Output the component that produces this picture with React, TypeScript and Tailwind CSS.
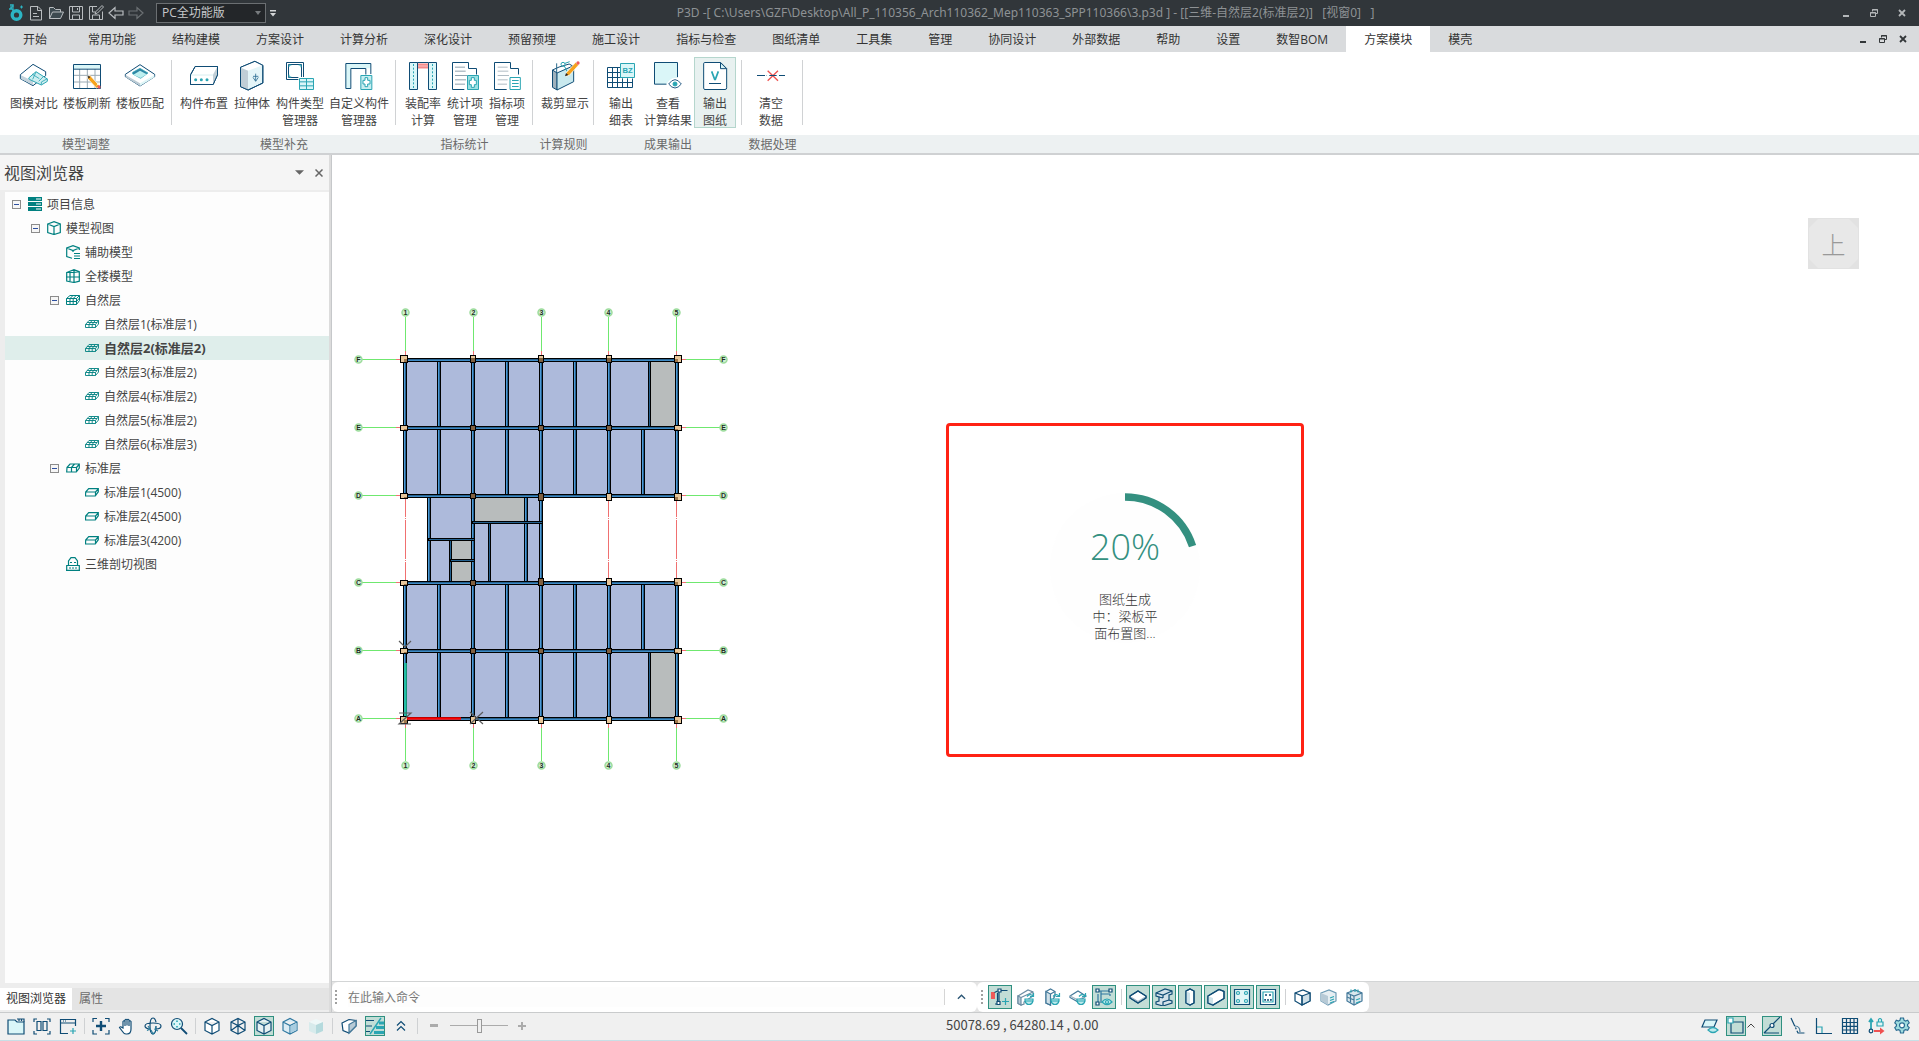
import React from "react";

const NAVY = "#0f4c75";
const TEAL = "#2aa5b3";
const ICE = "#daf6f8";
const GREEN = "#008080";

type Kids = { children: React.ReactNode };

/* ---------- title bar ---------- */

function TitleIcon({ children, label }: Kids & { label: string }) {
  return (
    <button aria-label={label} className="flex h-5 w-5 items-center justify-center">
      <svg viewBox="0 0 16 16" className="h-4 w-4" fill="none" stroke="#b9bdc0" strokeWidth="1">
        {children}
      </svg>
    </button>
  );
}

function WindowButtons({ color }: { color: string }) {
  return (
    <>
      <button aria-label="最小化" className="flex h-5 w-4 items-center justify-center">
        <svg viewBox="0 0 10 10" className="h-[10px] w-[10px]"><path d="M2 7h6v2H2z" fill={color} /></svg>
      </button>
      <button aria-label="还原" className="flex h-5 w-4 items-center justify-center">
        <svg viewBox="0 0 10 10" className="h-[10px] w-[10px]" fill="none" stroke={color}>
          <path d="M3.5 3.5v-2h5v4h-2M1.500 4.500h5v4h-5zM3 2h6M1 5h6" />
        </svg>
      </button>
      <button aria-label="关闭" className="flex h-5 w-4 items-center justify-center">
        <svg viewBox="0 0 10 10" className="h-[10px] w-[10px]" fill="none" stroke={color} strokeWidth="1.800">
          <path d="M2 2l6 6M8 2l-6 6" />
        </svg>
      </button>
    </>
  );
}

function TitleBar() {
  return (
    <header className="flex h-[26px] shrink-0 items-center bg-[#31363a]">
      <div className="flex items-center pl-[6px]">
        <div className="flex h-5 w-5 items-center justify-center">
          <svg viewBox="0 0 16 18" className="h-[18px] w-4" fill="none">
            <circle cx="8.500" cy="11" r="4.300" stroke="#2cb5c4" strokeWidth="3.400" />
            <path d="M2 1h3v2H3v2h2v5M1 5h2" stroke="#2cb5c4" strokeWidth="1.500" />
            <path d="M12 3h3M13.500 1.500v3" stroke="#2cb5c4" />
          </svg>
        </div>
        <TitleIcon label="新建">
          <path d="M2.500 1.500h7.500l3.500 3.500v10h-11zM9.500 1.500v4h4M5 8.500h4M5 11.500h6" />
        </TitleIcon>
        <TitleIcon label="打开">
          <path d="M1.500 13.500v-11h4l2 2h5v2.500M1.500 13.500l3-6.500h11l-3 6.500z" fill="#3d4a50" />
        </TitleIcon>
        <TitleIcon label="保存">
          <path d="M1.500 1.500h13v13h-13zM4.500 1.500v5.500h7v-5.500M4.500 14.500v-4.500h7v4.500M9.500 3v2" />
        </TitleIcon>
        <TitleIcon label="另存为">
          <path d="M9 1.500h-7.500v13h13v-8M4.500 1.500v5.500h3M4.500 14.500v-4.500h7v4.500M7 9l1-2.500 6-6 1.500 1.500-6 6z" />
        </TitleIcon>
        <TitleIcon label="撤销">
          <path d="M1 8l6-5.500V6h8v4H7v3.500z" strokeWidth="1.200" />
        </TitleIcon>
        <TitleIcon label="重做">
          <path d="M15 8L9 2.500V6H1v4h8v3.500z" stroke="#6c7174" strokeWidth="1.200" />
        </TitleIcon>
      </div>
      <div className="relative ml-[10px] flex h-5 w-[110px]">
        <select
          aria-label="功能版本"
          className="h-full w-full appearance-none border border-[#6b6f72] bg-[#232629] pl-[5px] text-xs leading-4 text-[#c6c8ca]"
        >
          <option>PC全功能版</option>
        </select>
        <svg viewBox="0 0 6 4" className="pointer-events-none absolute top-2 right-[5px] h-1 w-[6px]">
          <path d="M0 0h6l-3 4z" fill="#777b7e" />
        </svg>
      </div>
      <button aria-label="自定义快速访问工具栏" className="ml-[2px] flex h-5 w-[10px] items-center justify-center">
        <svg viewBox="0 0 6 7" className="h-[7px] w-[6px]" fill="#d5d7d8"><path d="M0 0h6v1.500H0zM0 3h6L3 6.500z" /></svg>
      </button>
      <h1 className="flex-1 text-center font-['Noto_Sans','Noto_Sans_CJK_SC',sans-serif] text-xs whitespace-pre text-[#8e9295]">
        {"P3D -[ C:\\Users\\GZF\\Desktop\\All_P_110356_Arch110362_Mep110363_SPP110366\\3.p3d ] - [[三维-自然层2(标准层2)]   [视窗0]   ]"}
      </h1>
      <div className="flex w-[146px] justify-end gap-3 pr-[9px]">
        <WindowButtons color="#b4b7b9" />
      </div>
    </header>
  );
}

/* ---------- tab bar ---------- */

const tabs = [
  "常用功能", "结构建模", "方案设计", "计算分析", "深化设计", "预留预埋", "施工设计", "指标与检查",
  "图纸清单", "工具集", "管理", "协同设计", "外部数据", "帮助", "设置", "数智BOM", "方案模块", "模壳",
];

function TabBar() {
  return (
    <nav className="flex h-[26px] shrink-0 bg-[#d9dbdd] text-xs text-[#333]">
      <button className="px-[23px] pt-[2px]">开始</button>
      {tabs.map((t) => (
        <button key={t} className={t === "方案模块" ? "bg-white px-[18px] pt-[2px]" : "px-[18px] pt-[2px]"}>
          {t}
        </button>
      ))}
      <div className="ml-auto flex items-center gap-1 pr-[8px]">
        <WindowButtons color="#333739" />
      </div>
    </nav>
  );
}

/* ---------- ribbon ---------- */

function RIcon({ x, children }: Kids & { x: number }) {
  return (
    <svg viewBox={`${x} 180 96 96`} className="h-8 w-8 shrink-0" fill="none" stroke={NAVY} strokeWidth="3">
      {children}
    </svg>
  );
}

const ribbonIcons: Record<string, React.ReactNode> = {
  compare: (
    <RIcon x={54}>
      <path d="M61 224l38-31 38 22v12l-38 30-38-21z" fill="#fff" />
      <path d="M63 226l36 18v11l-36-18z" fill="#c3d3dc" stroke="none" />
      <path d="M86 234l22-19 34 22v7l-18 11-36-17z" fill="#cdeef0" stroke={TEAL} />
      <path d="M96 222l22 14M108 216l-10 22M130 230l-14 14M124 246l18-10M124 246v8" stroke={TEAL} strokeWidth="2.500" />
    </RIcon>
  ),
  refresh: (
    <RIcon x={213}>
      <path d="M239 207v58M262 207v58M285 207v58M220 226h80M220 246h80" stroke="#9aa9b3" />
      <path d="M220.500 193.500h81v72h-81z" />
      <path d="M222 195h78v11h-78z" fill={ICE} stroke="none" />
      <path d="M220 207.500h82" />
      <path d="M264 229l6-3 28 31-8 8-27-29z" fill="#f6a21c" stroke="#fff" strokeWidth="2" />
      <path d="M263 228l8 2-5 6z" fill="#222" stroke="none" />
      <path d="M290 256l7-6" stroke="#fff7d0" />
      <circle cx="297" cy="261" r="5" fill="#f05a5a" stroke="none" />
    </RIcon>
  ),
  match: (
    <RIcon x={372}>
      <path d="M376 223l44-29 44 29v7l-44 28-44-28z" fill="#fff" />
      <path d="M377 225l43 25v8l-43-26z" fill="#bccbd4" stroke="none" />
      <path d="M420 250l43-25v7l-43 26z" fill="#dff6f7" stroke="none" />
      <path d="M398 217l22-12 24 14-22 16-24-13z" fill="#2f86a5" stroke={TEAL} strokeWidth="2" />
      <path d="M400 224l20-12 20 11-18 11z" fill="#bdf0f0" stroke="none" />
    </RIcon>
  ),
  place: (
    <RIcon x={564}>
      <path d="M571.500 224.500l14-25h67v25l-13 29h-68z" fill="#fff" />
      <path d="M639 224l13-24v24l-13 29z" fill="#c0ced6" stroke="none" />
      <path d="M571 225h68" stroke="#d8eef0" />
      <path d="M571.500 224.500l14-25h67v25l-13 29h-68z" />
      <g fill={TEAL} stroke="none"><circle cx="587" cy="239" r="4.500" /><circle cx="604" cy="239" r="4.500" /><circle cx="621" cy="239" r="4.500" /></g>
    </RIcon>
  ),
  extrude: (
    <RIcon x={708}>
      <path d="M721.500 202l43-18 24 12v53l-44 21-23-10z" fill="#e4f5f8" />
      <path d="M722 202l43-17 23 11-44 16z" fill="#fff" stroke="none" />
      <path d="M722 203l22 9v57l-22-9z" fill="#c0ced6" stroke="none" />
      <path d="M721.500 202l43-18 24 12v53l-44 21-23-10z" />
      <path d="M767 221v22M759 232l8 12 8-12M759 229h16" stroke="#2a6c92" strokeWidth="2.500" />
    </RIcon>
  ),
  types: (
    <RIcon x={849}>
      <path d="M856.500 187.500h51v51h-51zM862.500 193.500h39v39h-39z" />
      <path d="M864 201v-6h7M893 195h7v7M864 224v7h7" stroke={TEAL} />
      <path d="M892 231h50v42h-50z" fill="#fff" stroke="none" />
      <path d="M895.500 235.500h42v33h-42zM895 245.500h42M895 257.500h42M916.500 235v33" stroke={TEAL} fill={ICE} />
    </RIcon>
  ),
  custom: (
    <RIcon x={1028}>
      <path d="M1036 190.500h75v14h-61v61h-14z" fill={ICE} stroke="none" />
      <path d="M1111.500 222v-31.500h-75v75h15v-60h45v18" fill="none" />
      <path d="M1081.500 226.500h33v42h-33z" stroke={TEAL} fill="#c7eef0" />
      <path d="M1094 233h8v8h7v11h-7v8h-8v-8h-6v-11h6z" stroke={TEAL} fill="#fff" />
    </RIcon>
  ),
  assembly: (
    <RIcon x={21}>
      <path d="M28.500 187.500h24v81h-24zM85.500 187.500h24v81h-24z" fill={ICE} />
      <path d="M40.500 192v74M97.500 192v74" stroke={TEAL} strokeDasharray="6 5" />
      <path d="M52 187.500h33" />
      <path d="M54 192.500h30M54 198h30M54 203.500h30" stroke="#f05050" />
    </RIcon>
  ),
  stat: (
    <RIcon x={147}>
      <path d="M193 268.500h-35.500v-81h48v18h24v18" />
      <path d="M165 201.500h30M165 213.500h32M165 226.500h36M165 239.500h33M165 252.500h30" stroke="#8fa1ad" />
      <path d="M202.500 226.500h33v42h-33z" stroke={TEAL} fill="#9be0e2" />
      <path d="M214 233h9v8h6v13h-6v8h-9v-8h-6v-13h6z" fill="#fff" stroke={TEAL} />
    </RIcon>
  ),
  index: (
    <RIcon x={273}>
      <path d="M320 268.500h-36.500v-81h48v18h24v18" />
      <path d="M293 201.500h30M293 213.500h32M293 226.500h34M293 239.500h30M293 252.500h28" stroke="#b0bcc4" />
      <path d="M330 232.500h31v36h-31z" stroke={TEAL} fill="#fff" />
      <path d="M336 241.500h20M336 250.500h20M336 259.500h20" stroke={TEAL} />
    </RIcon>
  ),
  crop: (
    <RIcon x={447}>
      <path d="M457.500 210l14 9v51l-14-8z" fill="#9fb1bc" />
      <path d="M471 219l50-22v48l-50 25z" fill="#c9e9ee" />
      <path d="M457.500 210l20-9 30-9 14 8" />
      <path d="M470 190v26" stroke="#2b6b8e" />
      <circle cx="489" cy="193" r="6" stroke={TEAL} /><path d="M493 198l8 16M495 190l14-5" stroke={TEAL} />
      <path d="M499 218l28-31 9 8-28 31-12 3z" fill="#f6a21c" stroke="#fff" strokeWidth="2" />
      <path d="M495 229l3-10 7 6z" fill="#222" stroke="none" /><circle cx="534" cy="189" r="5" fill="#f05a5a" stroke="none" />
    </RIcon>
  ),
  table: (
    <RIcon x={615}>
      <path d="M660 202.500h-37.500v60h75v-27M622 217.500h38M622 232.500h76M622 247.500h76M637.500 202v60M652.500 202v60M667.500 235v27M682.500 235v27" />
      <path d="M661.500 190.500h42v42h-42z" fill={ICE} stroke={TEAL} />
      <text x="682.500" y="220" fontSize="23" fontWeight="700" textAnchor="middle" fill={TEAL} stroke="none" fontFamily="Liberation Sans, sans-serif">BZ</text>
    </RIcon>
  ),
  view: (
    <RIcon x={756}>
      <path d="M800 252.500h-36.500v-65h69v44" fill={ICE} />
      <path d="M804 252q20-28 42 0q-22 24-42 0z" fill="#fff" stroke="#fff" strokeWidth="8" />
      <path d="M806 252q19-26 38 0q-19 24-38 0z" fill="#fff" stroke="#2b5f88" />
      <circle cx="825" cy="252" r="6" fill={TEAL} stroke={TEAL} />
    </RIcon>
  ),
  drawing: (
    <RIcon x={900}>
      <path d="M917 187.500h48l18 18v58q0 5-5 5h-60q-4 0-4-4v-73q0-4 3-4z" fill="#fff" />
      <path d="M964.500 188v18h18z" fill={ICE} />
      <path d="M938 214l9 24h2l9-24" stroke={TEAL} strokeWidth="5" />
      <path d="M930 250.500h36" />
    </RIcon>
  ),
  clear: (
    <RIcon x={1065}>
      <path d="M1071 226.500h28M1137 226.500h18" strokeDasharray="24 3 4 3" />
      <path d="M1103 212l31 30M1134 212l-31 30" stroke="#ef5350" strokeWidth="4" />
      <path d="M1108 226.500h22" />
    </RIcon>
  ),
};

type RibbonTool = { icon: string; lines: string[]; active?: boolean };
const groups: { label: string; width: string; tools: RibbonTool[] }[] = [
  {
    label: "模型调整", width: "w-[172px] [&>div]:gap-px [&>div]:pl-2",
    tools: [
      { icon: "compare", lines: ["图模对比"] },
      { icon: "refresh", lines: ["楼板刷新"] },
      { icon: "match", lines: ["楼板匹配"] },
    ],
  },
  {
    label: "模型补充", width: "w-[224px] [&>div]:gap-px [&>div]:pl-[6px]",
    tools: [
      { icon: "place", lines: ["构件布置"] },
      { icon: "extrude", lines: ["拉伸体"] },
      { icon: "types", lines: ["构件类型", "管理器"] },
      { icon: "custom", lines: ["自定义构件", "管理器"] },
    ],
  },
  {
    label: "指标统计", width: "w-[137px] [&>div]:pl-[6px]",
    tools: [
      { icon: "assembly", lines: ["装配率", "计算"] },
      { icon: "stat", lines: ["统计项", "管理"] },
      { icon: "index", lines: ["指标项", "管理"] },
    ],
  },
  { label: "计算规则", width: "w-[61px] [&>div]:pl-[6px]", tools: [{ icon: "crop", lines: ["裁剪显示"] }] },
  {
    label: "成果输出", width: "w-[148px] [&>div]:pl-[6px]",
    tools: [
      { icon: "table", lines: ["输出", "细表"] },
      { icon: "view", lines: ["查看", "计算结果"] },
      { icon: "drawing", lines: ["输出", "图纸"], active: true },
    ],
  },
  { label: "数据处理", width: "w-[61px] [&>div]:pl-2", tools: [{ icon: "clear", lines: ["清空", "数据"] }] },
];

function Ribbon() {
  return (
    <div className="flex h-[103px] shrink-0 border-b-2 border-[#cfd1d3] bg-white text-xs">
      {groups.map((g) => (
        <section key={g.label} aria-label={g.label} className={`flex shrink-0 flex-col ${g.width}`}>
          <div className="flex flex-1 pt-[5px]">
            {g.tools.map((t) => (
              <button
                key={t.icon}
                className={
                  t.active
                    ? "flex h-[71px] min-w-[42px] flex-col items-center border border-[#b5d6cd] bg-[#e8f1f0] px-px pt-[2px] text-[#444]"
                    : "flex h-[71px] min-w-[42px] flex-col items-center border border-transparent px-px pt-[2px] text-[#444]"
                }
              >
                {ribbonIcons[t.icon]}
                <span className="mt-[3px] flex flex-col leading-[17px] whitespace-nowrap">
                  {t.lines.map((l) => <span key={l}>{l}</span>)}
                </span>
              </button>
            ))}
            <span className="mt-[3px] ml-auto h-[65px] w-px bg-[#d0d2d4]" />
          </div>
          <h2 className="h-[18px] bg-[#edf1f2] text-center leading-5 text-[#6b6b6b]">{g.label}</h2>
        </section>
      ))}
      <div className="flex flex-1 flex-col justify-end"><div className="h-[18px] bg-[#edf1f2]" /></div>
    </div>
  );
}

/* ---------- view browser ---------- */

const treeIcons: Record<string, React.ReactNode> = {
  project: <path d="M0 0h14v4H0zM0 5h14v4H0zM0 10h14v4H0zM8 1.500h5v1H8zM8 6.500h5v1H8zM8 11.500h5v1H8z" fill={GREEN} fillRule="evenodd" stroke="none" />,
  cube: <path d="M.7 3L7 .7 13.300 3v8.500L7 13.500.7 11.500zM.7 3L7 5.500 13.300 3M7 5.500v8" />,
  aux: <path d="M6 13.300L.7 11.500V3L7 .7 13.300 3v2M.7 3L7 5.500 13.300 3M8 8.500h6M8 11h6M8 13.500h6M7 5.500v1.500" />,
  whole: <path d="M.7 3.500L8 .7l5.300 2v9.500L8 13.500.7 12zM.7 3.500h7.300l5.300-.8M0 8h14M8 1v12.500M4 3v9" />,
  grid: <path d="M.5 5.500L4 2.500h9.500v5l-3 4H.5zM.5 5.500h10v6M10.500 5.500l3-3M.5 8.500h10l3-3.500M4 5.500v6M7.200 5.500v6M4 5.500l3-3M7.200 5.500l3-3" strokeWidth="1" />,
  floor: <path d="M.5 7.500L4 3.500h9.500V7l-3 3.500H.5zM.5 7.500h10v3M10.500 7.500l3-4M4 7.500v3M7.200 7.500v3M4 7.500l3-4M7.200 7.500l3-4M2.200 5.500h9.800" strokeWidth="0.900" />,
  std: <path d="M1 6.500l3-3.500h9.300v4l-3 4H.7zM1 6.500h9.500v4.500M10.500 6.500l3-3.500M5.500 6.500v4.500M5.500 6.500l3-3.500" />,
  slab: <path d="M.7 7l3-3.300h9.600v3l-3 4.300H.5zM.7 7h9.800v4M10.500 7l3-3.300" />,
  section: <path d="M2.500 6V4L5 .7h4L11.500 4v2M.7 13.500v-5h12.600v5M2.500 6v2.500M11.500 6v2.500M0 13.300h14M3 11h2M6 11h2M9 11h2M4 5.500h2M8 5.500h2" />,
};

const rows: { level: number; icon: string; text: string; open?: boolean; selected?: boolean }[] = [
  { level: 0, icon: "project", text: "项目信息", open: true },
  { level: 1, icon: "cube", text: "模型视图", open: true },
  { level: 2, icon: "aux", text: "辅助模型" },
  { level: 2, icon: "whole", text: "全楼模型" },
  { level: 2, icon: "grid", text: "自然层", open: true },
  { level: 3, icon: "floor", text: "自然层1(标准层1)" },
  { level: 3, icon: "floor", text: "自然层2(标准层2)", selected: true },
  { level: 3, icon: "floor", text: "自然层3(标准层2)" },
  { level: 3, icon: "floor", text: "自然层4(标准层2)" },
  { level: 3, icon: "floor", text: "自然层5(标准层2)" },
  { level: 3, icon: "floor", text: "自然层6(标准层3)" },
  { level: 2, icon: "std", text: "标准层", open: true },
  { level: 3, icon: "slab", text: "标准层1(4500)" },
  { level: 3, icon: "slab", text: "标准层2(4500)" },
  { level: 3, icon: "slab", text: "标准层3(4200)" },
  { level: 2, icon: "section", text: "三维剖切视图" },
];
const indents = ["pl-[7px]", "pl-[26px]", "pl-[45px]", "pl-[64px]"];

function ViewBrowser() {
  return (
    <aside className="flex w-[329px] shrink-0 flex-col bg-[#ededed]">
      <div className="flex h-[35px] items-center bg-[#f5f5f5] pl-1">
        <h2 className="flex-1 text-base leading-5 text-[#444]">视图浏览器</h2>
        <button aria-label="面板菜单" className="flex h-5 w-5 items-center justify-center">
          <svg viewBox="0 0 10 5" className="h-[5px] w-[9px]"><path d="M0 0h10L5 5z" fill="#666" /></svg>
        </button>
        <button aria-label="关闭面板" className="flex h-5 w-5 items-center justify-center">
          <svg viewBox="0 0 8 8" className="h-2 w-2" stroke="#666" strokeWidth="1.500"><path d="M.5.5l7 7M7.500.5l-7 7" /></svg>
        </button>
      </div>
      <ul role="tree" aria-label="视图" className="mt-[2px] ml-[5px] flex-1 bg-[#fdfdfd] text-xs text-[#444]">
        {rows.map((r) => (
          <li
            key={r.text}
            role="treeitem"
            aria-selected={!!r.selected}
            aria-level={r.level + 1}
            className={`flex h-6 items-center ${indents[r.level]} ${r.selected ? "bg-[#dfeeeb] text-[13px] font-bold" : ""}`}
          >
            {r.open ? (
              <button aria-label="折叠" className="flex h-[9px] w-[9px] items-center justify-center border border-[#8c8c8c] bg-[#f6f6f6]">
                <span className="h-px w-[5px] bg-[#2d4fa0]" />
              </button>
            ) : (
              <span className="w-[9px]" />
            )}
            <svg viewBox="0 0 14 14" className="mr-[5px] ml-[7px] h-[14px] w-[14px]" fill="none" stroke={GREEN} strokeWidth="1.200">
              {treeIcons[r.icon]}
            </svg>
            <span className="pt-[2px]">{r.text}</span>
          </li>
        ))}
      </ul>
      <div className="mt-[5px] mb-[2px] flex h-[22px] bg-[#e4e4e4] text-xs">
        <button className="bg-white px-[6px] text-[#333]">视图浏览器</button>
        <button className="px-[7px] text-[#6b6b6b]">属性</button>
      </div>
    </aside>
  );
}

/* ---------- floor plan ---------- */

type Rect = [number, number, number, number];
const slabs: Rect[] = [[64, 69, 274, 138], [64, 292, 274, 138], [88, 206, 114, 86]];
const voids: Rect[] = [[310, 71, 26, 66], [310, 362, 26, 66], [134, 207, 51, 25], [111, 250, 21, 41]];
const vBeams: Rect[] = [
  [63, 69, 4, 138], [131, 69, 4, 360], [199, 69, 4, 360], [267, 69, 4, 138], [335, 69, 4, 138],
  [63, 292, 4, 138], [267, 292, 4, 138], [335, 292, 4, 138],
  [97, 69, 4, 137], [165, 69, 4, 137], [233, 69, 4, 137], [301, 137, 4, 69],
  [97, 292, 4, 137], [165, 292, 4, 137], [233, 292, 4, 137], [301, 292, 4, 69],
  [308, 69, 3, 69], [308, 360, 3, 69], [87, 205, 4, 88], [184, 205, 4, 88], [148, 232, 3, 61], [109, 249, 3, 44],
];
const hBeams: Rect[] = [
  [63, 68, 276, 4], [63, 136, 276, 4], [63, 204, 276, 4], [63, 291, 276, 4], [63, 359, 276, 4], [63, 427, 276, 4],
  [132, 231, 71, 3], [88, 248, 47, 3], [110, 269, 25, 3],
];
const columns: [number, number, number, number, boolean][] = [
  [60, 65, 8, 8, false], [130, 65, 6, 8, true], [198, 65, 6, 8, true], [266, 65, 6, 8, true], [334, 65, 8, 8, false],
  [60, 135, 8, 6, false], [130, 135, 6, 6, true], [198, 135, 6, 6, true], [266, 135, 6, 6, true], [334, 135, 8, 6, false],
  [60, 203, 8, 6, false], [130, 203, 6, 6, true], [198, 203, 6, 8, true], [266, 203, 6, 8, false], [334, 203, 8, 8, false],
  [60, 290, 8, 6, false], [130, 290, 6, 6, true], [198, 288, 6, 8, true], [266, 288, 6, 8, false], [334, 288, 8, 8, false],
  [60, 358, 8, 6, false], [130, 358, 6, 6, true], [198, 358, 6, 6, true], [266, 358, 6, 6, true], [334, 358, 8, 6, false],
  [60, 426, 8, 8, false], [130, 426, 6, 8, false], [198, 426, 6, 8, false], [266, 426, 6, 8, false], [334, 426, 8, 8, false],
];
const axisX: [string, number][] = [["1", 65.5], ["2", 133.5], ["3", 201.5], ["4", 268.5], ["5", 336.5]];
const axisY: [string, number][] = [["F", 69.5], ["E", 137.5], ["D", 205.5], ["C", 292.5], ["B", 360.5], ["A", 428.5]];

function Bubble({ x, y, label }: { x: number; y: number; label: string }) {
  return (
    <g>
      <circle cx={x} cy={y} r="3.500" fill="#d2efd2" stroke="#9ddc9d" strokeWidth="1.500" />
      <text x={x} y={y + 2.5} textAnchor="middle" fontSize="7" fontWeight="700" fill="#1c2e1f">{label}</text>
    </g>
  );
}

function FloorPlan() {
  return (
    <svg viewBox="0 0 400 500" className="absolute top-[135px] left-2 h-[500px] w-[400px]" fontFamily="Liberation Sans, sans-serif">
      {axisX.map(([l, x]) => (
        <g key={l}>
          <path d={`M${x} 27V61M${x} 438V471`} stroke="#6fe86f" />
          <path d={`M${x} 61V70M${x} 430V438`} stroke="#f07070" />
          <Bubble x={x} y={22.5} label={l} />
          <Bubble x={x} y={475.5} label={l} />
        </g>
      ))}
      {axisY.map(([l, y]) => (
        <g key={l}>
          <path d={`M22 ${y}H56M346 ${y}H380`} stroke="#6fe86f" />
          <path d={`M56 ${y}H62M340 ${y}H346`} stroke="#f07070" />
          <Bubble x={18.5} y={y} label={l} />
          <Bubble x={383.5} y={y} label={l} />
        </g>
      ))}
      {[65.5, 268.5, 336.5].map((x) => (
        <path key={x} d={`M${x} 208V227M${x} 228V229M${x} 230V269M${x} 270V271M${x} 272V291`} stroke="#f07070" />
      ))}
      {slabs.map(([x, y, w, h]) => <rect key={`${x}-${y}`} x={x} y={y} width={w} height={h} fill="#adbadb" />)}
      {voids.map(([x, y, w, h]) => <rect key={`${x}-${y}`} x={x} y={y} width={w} height={h} fill="#b8bcbc" />)}
      {vBeams.map(([x, y, w, h]) => (
        <g key={`${x}-${y}`}>
          <rect x={x} y={y} width={w} height={h} fill="#000" />
          <rect x={x + 1} y={y} width={w - 2} height={h} fill="#24618f" />
          {w > 3 && <rect x={x + 1} y={y} width="1" height={h} fill="#4d9ad6" />}
        </g>
      ))}
      {hBeams.map(([x, y, w, h]) => (
        <g key={`${x}-${y}`}>
          <rect x={x} y={y} width={w} height={h} fill="#000" />
          <rect x={x + 1} y={y + 1} width={w - 2} height={h - 2} fill="#24618f" />
          {h > 3 && <rect x={x + 1} y={y + 2} width={w - 2} height="1" fill="#3f8ac4" />}
        </g>
      ))}
      {columns.map(([x, y, w, h, dark]) => (
        <g key={`${x}-${y}`}>
          <rect x={x} y={y} width={w} height={h} fill="#000" />
          <rect x={x + 1} y={y + 1} width={w - 2} height={h - 2} fill={dark ? "#80603f" : "#e8c79b"} />
          {!dark && w === 8 && <rect x={x < 100 ? x + 4 : x + 1} y={y + 4} width="3" height={h - 5} fill="#a07a4e" />}
          {dark && h === 8 && y < 100 && <rect x={x + 1} y={y + 1} width="4" height="2" fill="#e8c79b" />}
        </g>
      ))}
      <path d="M65.500 373V426" stroke="#1fc3a0" strokeWidth="2.500" />
      <path d="M67 428.500H121" stroke="#f00" strokeWidth="2.500" />
      <path d="M59 351L65 357L71 351M59 423H71L59 434H71M130 422L143 434M143 422L130 434" stroke="#5c5c5c" strokeWidth="1.200" fill="none" />
    </svg>
  );
}

function ProgressPanel() {
  return (
    <div className="absolute top-[268px] left-[614px] flex h-[334px] w-[358px] justify-center rounded-[4px] border-[3px] border-[#ff2214] pt-[67px]">
      <div role="progressbar" aria-valuenow={20} aria-label="图纸生成进度" className="relative h-[150px] w-[150px]">
        <svg viewBox="0 0 150 150" className="absolute inset-0" fill="none">
          <circle cx="75" cy="75" r="75" fill="#fefefe" />
          <path d="M75 4A71 71 0 0 1 142.520 53.060" stroke="#349080" strokeWidth="7.500" />
        </svg>
        <div className="relative flex flex-col items-center pt-8">
          <span className="font-['Open_Sans',sans-serif] text-4xl leading-[44px] font-light text-[#349080]">20%</span>
          <p className="mt-[22px] w-[66px] text-center text-[13px] leading-[17px] font-light text-[#333]">
            图纸生成<br />中：梁板平<br />面布置图...
          </p>
        </div>
      </div>
    </div>
  );
}

function ViewCube() {
  return (
    <button aria-label="上视图" className="absolute top-[63px] right-[60px] h-[51px] w-[51px]">
      <svg viewBox="0 0 51 51" className="absolute inset-0">
        <path d="M0 0h51v51H0z" fill="#e2e2e2" />
        <path d="M10 1h31l9 9v31l-9 9H10l-9-9V10z" fill="#e8e8e8" />
      </svg>
      <span className="relative font-['Noto_Sans_CJK_SC',sans-serif] text-2xl leading-[51px] font-light text-[#999]">上</span>
    </button>
  );
}

/* ---------- bottom tool bars ---------- */

function Tool({ label, on, small, children }: Kids & { label: string; on?: boolean; small?: boolean }) {
  const size = small ? "h-5 w-5" : "h-6 w-6";
  return (
    <button
      aria-label={label}
      aria-pressed={!!on}
      className={`flex shrink-0 items-center justify-center ${size} ${on ? "border border-[#2f9080] bg-[#c2ddd6]" : ""}`}
    >
      <svg viewBox="0 0 18 18" className="h-[18px] w-[18px] shrink-0" fill="none" stroke={NAVY} strokeWidth="1.200">
        {children}
      </svg>
    </button>
  );
}

const Sep = () => <span className="h-4 w-px shrink-0 bg-[#cfd1d3]" />;
const WideSep = () => <span className="flex w-[6px] shrink-0 justify-center"><Sep /></span>;
const Grip = () => (
  <svg viewBox="0 0 2 16" className="h-4 w-[2px] shrink-0" fill="#a0a0a0">
    <path d="M0 1h2v2H0zM0 5h2v2H0zM0 9h2v2H0zM0 13h2v2H0z" />
  </svg>
);
const Cup = () => (
  <g stroke={TEAL}>
    <path d="M8 11h8v2q-1 3.500-4 3.500t-4-3.500zM8 13h8" fill="#bdeaec" />
    <path d="M10 8.500q3-3.500 6-.5M16.500 5v3.500H13" />
  </g>
);

function CommandBar() {
  return (
    <div className="flex h-[31px] shrink-0 border-t border-[#d3d5d6] bg-[#e4e4e4]">
      <div className="flex w-[645px] items-center rounded-md bg-white pl-[3px]">
        <Grip />
        <input
          aria-label="命令"
          placeholder="在此输入命令"
          className="ml-[11px] h-5 min-w-0 flex-1 bg-[#fdfdfd] text-xs text-[#555] outline-none placeholder:text-[#777]"
        />
        <span className="h-4 w-px bg-[#d5d5d5]" />
        <button aria-label="展开命令历史" className="flex h-6 w-8 items-center justify-center">
          <svg viewBox="0 0 10 6" className="h-[6px] w-[9px]" fill="none" stroke="#2b5675" strokeWidth="1.500"><path d="M1 5l4-4 4 4" /></svg>
        </button>
      </div>
      <div className="flex items-center gap-[2px] rounded-md bg-white pr-[3px] pl-1">
        <Grip />
        <span className="w-px" />
        <Tool label="添加轴线" on>
          <path d="M0 4h4v7H0z" fill="#f05a5a" stroke="none" />
          <path d="M8 4v10M9.500 2.500h7M6.500 5v10M3.500 4.500l3-1.500M4 16h4" />
          <path d="M7 1h3v3H7zM6 13.500h3v3H6z" fill="#fff" />
          <path d="M11 13.500h7M14.500 10v7" stroke={TEAL} />
        </Tool>
        <Tool label="显示墙体">
          <path d="M1 8l10-6 5 2v4l-9 6v2l-3 1-3-1.500z" fill="#fff" stroke="#6c8da3" /><path d="M1 8l3 1.500V17l-3-1.500z" fill="#b7cad6" stroke="#6c8da3" /><path d="M4 9.500L16 4" stroke="#6c8da3" /><Cup />
        </Tool>
        <Tool label="显示柱">
          <path d="M3 3.500L7.500 1 12 3.500V8l-4.500 7v2L3 15z" fill="#fff" stroke="#44799a" /><path d="M3 3.500L7.500 6v11L3 15z" fill="#cfe0e8" stroke="#44799a" /><path d="M7.500 6L12 3.500" stroke="#44799a" /><Cup />
        </Tool>
        <Tool label="显示楼板">
          <path d="M1 8l8-5 8 5-8 6-8-4.500z" fill="#fff" stroke="#44799a" /><path d="M1 8l8 4 8-4" stroke="#9fb5c3" /><Cup />
        </Tool>
        <Tool label="显示轴网" on>
          <path d="M3 3h12M3 6v9M15 6v2M6 3v12M6 6h9" stroke="#2f78a0" />
          <path d="M1 1h3v3H1zM14 1h3v3h-3zM1 14h3v3H1z" fill="#fff" />
          <path d="M7 14q5-6 10 0q-5 5-10 0z" stroke={TEAL} fill="#bdeaec" /><circle cx="12" cy="14" r="1.500" stroke={TEAL} />
        </Tool>
        <WideSep />
        <Tool label="板" on>
          <path d="M1 8l8-5 8 5v2l-8 5-8-5z" fill="#fff" /><path d="M1.500 9l7.500 4.500L16.500 9" stroke="#9fb5c3" /><path d="M1 8l8-5 8 5v2l-8 5-8-5z" />
        </Tool>
        <Tool label="梁" on>
          <path d="M1 5l9-4 7 2v3l-3 1v5l3 1v2l-9 3-7-2v-2l3-1V9L1 8z" fill="#d4e2ea" /><path d="M1 5l7 2 9-4M8 7v3M8 18v-4l6-2M4 9l4 1" />
        </Tool>
        <Tool label="柱" on>
          <path d="M5 3l4-2 4 2v12l-4 2-4-2z" fill="#fff" /><path d="M5 3l4 2v12l-4-2z" fill="#cfe3ea" stroke="none" /><path d="M5 3l4-2 4 2v12l-4 2-4-2z" />
        </Tool>
        <Tool label="墙" on>
          <path d="M1 8l11-6.500 5 2v7L6 17l-5-2z" fill="#fff" /><path d="M1 8l5 2v7l-5-2z" fill="#cfe3ea" stroke="none" /><path d="M1 8l11-6.500 5 2v7L6 17l-5-2z" />
        </Tool>
        <Tool label="孔洞" on>
          <path d="M1.500 1.500h15v15h-15z" fill="#e2f6f7" />
          <g stroke={TEAL}><circle cx="5" cy="5" r="1.500" /><circle cx="13" cy="5" r="1.500" /><circle cx="5" cy="13" r="1.500" /><circle cx="13" cy="13" r="1.500" /></g>
        </Tool>
        <Tool label="预埋" on>
          <path d="M1.500 1.500h15v15h-15z" fill="#fff" /><path d="M4 4h10v10H4z" stroke={TEAL} />
          <path d="M7 6v2M11 6v2M6 11v1h1M12 11v1h-1M9 11v2" strokeWidth="1.500" />
        </Tool>
        <WideSep />
        <Tool label="三维视图">
          <path d="M2 5l8-3 7 3v8l-8 4-7-4z" fill="#fff" /><path d="M9 8l8-3v8l-8 4z" fill="#cfe0e8" /><path d="M2 5l7 3v9" />
        </Tool>
        <Tool label="三维明细">
          <path d="M2 5l8-3 7 3v8l-8 4-7-4z" fill="#e6eef2" stroke="#6c9bb5" /><path d="M2 5l7 3v9l-7-4z" fill="#b7cad6" stroke="none" /><path d="M11 10l4-1.500M11 12.500l4-1.500M11 15l4-1.500" stroke={TEAL} />
        </Tool>
        <Tool label="构件明细">
          <path d="M2 5l8-3 7 3v8l-8 4-7-4z" fill="#dbe8ee" stroke="#44799a" /><path d="M2 5l7 3 8-3M9 8v9M2 9l7 3M5.500 6.500v8" stroke="#44799a" /><path d="M6 1.500v3M10 1v3M13 1.500v3M11 12l4-1.500M11 15l4-1.500" stroke={TEAL} />
        </Tool>
      </div>
    </div>
  );
}

const cubePath = "M2 5l7-3.500L16 5v8.500L9 17l-7-3.500zM2 5l7 3.500L16 5M9 8.500V17";

function StatusBar() {
  return (
    <footer className="flex h-[29px] shrink-0 items-center border-t border-b border-t-[#c9cbcc] border-b-[#c8dfe6] bg-[#f0f0f0] pr-[7px] pb-[2px] pl-[6px]">
      <div className="flex w-[940px] shrink-0 items-center gap-[6px]">
        <Tool small label="窗口"><path d="M1 3h7l2 2h7v12H1z" fill={ICE} /><path d="M10 2h7v3M12 2v2M14.500 2v2" /></Tool>
        <Tool small label="平铺"><path d="M1 5V2h3M14 2h3v3M1 14v3h3M14 17h3v-3M4 4.500h4v9H4zM10 4.500h4v9h-4z" /></Tool>
        <Tool small label="新建窗口"><path d="M9 16.500H1.500v-14h15V9M1.500 6h15M4 4h1M6 4h1" /><path d="M11 14h6M14 11v6" stroke={TEAL} /></Tool>
        <Sep />
        <Tool small label="全图"><path d="M1 5V1.500h4M13 1.500h4V5M1 13v4h4M13 17h4v-4" /><path d="M9 4v10M4 9h10" strokeWidth="2.400" /></Tool>
        <Tool small label="平移"><path d="M5 11V4.500q1-1.500 2 0V9 3q1-1.500 2 0v5.500V3q1-1.500 2 0V9 4.500q1-1.500 2 0V12q0 5-4 5H8q-2 0-3.500-2.500L1.500 10.500q1-1.500 2.500 0z" fill="#fff" /></Tool>
        <Tool small label="环绕"><path d="M1 9q0-3 8-3t8 3-5 3M1 9q0 2 4 3M9 1Q6 1 6 9t3 8 3-8M9 1q2 0 3 4" /><path d="M12 9.500l-1 3 3 1.500M4 9l2 3-3 1.500M7 13l2 4 2-2" stroke="#2a7d9c" /></Tool>
        <Tool small label="缩放"><circle cx="7" cy="7" r="5.500" fill={ICE} /><path d="M11 11l6 6" strokeWidth="1.800" /><path d="M7 3.500v1.500M7 9v1.500M3.500 7H5M9 7h1.500" stroke={TEAL} strokeWidth="1.600" /></Tool>
        <Sep />
        <Tool small label="线框"><path d={cubePath} fill="#fff" /></Tool>
        <Tool small label="透视线框"><path d={`${cubePath}M9 1.500v7M2 13.500l7-5 7 5`} /></Tool>
        <Tool small label="隐藏线" on><path d={cubePath} fill="#e6f1f2" /></Tool>
        <Tool small label="着色"><path d={cubePath} fill="#dcecf4" stroke="#2f78a0" /><path d="M9.500 9l6-3v7l-6 3z" fill="#a9cde0" stroke="none" /></Tool>
        <Tool small label="真实"><path d="M2 5l7-3 7 3-7 3z" fill="#eef8f8" stroke="none" /><path d="M2 5l7 3v9l-7-3z" fill="#d7ebec" stroke="none" /><path d="M9 8l7-3v9l-7 3z" fill="#b5dadd" stroke="none" /></Tool>
        <Sep />
        <Tool small label="剖切"><path d="M2 6l7-3.500 7 1v5.500l-7 7-6-2.500z" fill="#fff" /><path d="M9 7.500l7-4V9l-7 7z" fill="#b7cad6" stroke="#44799a" /></Tool>
        <Tool small label="细线" on><path d="M0 3.500h8M0 9h6M0 14.500h4" /><path d="M15 1L4 17" stroke={TEAL} strokeWidth="1.500" /><path d="M13 6h5M10 10.500h8M8 15.500h10" stroke={TEAL} strokeWidth="3" /></Tool>
        <Tool small label="收起"><path d="M5 8.500l4-4 4 4M5 13.500l4-4 4 4" /></Tool>
        <Sep />
        <button aria-label="减小" className="flex h-5 w-5 items-center justify-center"><span className="h-[3px] w-2 bg-[#ababab]" /></button>
        <input
          type="range"
          aria-label="缩放比例"
          defaultValue={50}
          className="h-4 w-[58px] appearance-none bg-transparent bg-[linear-gradient(#ababab,#ababab)] bg-[length:100%_1px] bg-center bg-no-repeat [&::-webkit-slider-thumb]:h-[14px] [&::-webkit-slider-thumb]:w-[5px] [&::-webkit-slider-thumb]:appearance-none [&::-webkit-slider-thumb]:border [&::-webkit-slider-thumb]:border-[#999] [&::-webkit-slider-thumb]:bg-[#f0f0f0]"
        />
        <button aria-label="增大" className="flex h-5 w-4 items-center justify-center">
          <svg viewBox="0 0 8 8" className="h-2 w-2" stroke="#ababab" strokeWidth="2"><path d="M0 4h8M4 0v8" /></svg>
        </button>
      </div>
      <output className="flex-1 pb-[2px] font-['Noto_Sans_CJK_SC',sans-serif] text-[13px] leading-4 text-[#444]">50078.69 , 64280.14 , 0.00</output>
      <div className="flex items-center gap-[6px]">
        <Tool small label="工作平面"><path d="M4 3h12l-3 7H1z" fill={ICE} /><path d="M7 13q5-5 10 0q-5 5-10 0z" stroke={TEAL} fill="#bdeaec" /></Tool>
        <Tool small label="对象捕捉" on><path d="M5 5h11v11H4V5" /><path d="M1 1h5v5H1z" fill="#fff" stroke={TEAL} /></Tool>
        <button aria-label="捕捉选项" className="-ml-[6px] flex h-5 w-[10px] items-center justify-center">
          <svg viewBox="0 0 8 5" className="h-[5px] w-2" fill="none" stroke="#444"><path d="M.5 4.500L4 1l3.500 3.500" /></svg>
        </button>
        <Tool small label="最近点" on><path d="M1 16h15M1 16L7.500 9.500M10 7l7-7" /><circle cx="9" cy="8.500" r="2" fill="#fff" /></Tool>
        <Tool small label="极轴"><path d="M2 1l7 15h8" strokeDasharray="9 1.500 2 1.500" /><path d="M6 9q5 0 5 6" stroke="#44799a" /></Tool>
        <Tool small label="正交"><path d="M1.500 1v15.500H17" /><path d="M2 10h5v6" stroke={TEAL} /></Tool>
        <Tool small label="网格"><path d="M1.500 1.500h15v15h-15zM1 5.500h16M1 9.300h16M1 13h16M5.500 1v16M9.300 1v16M13 1v16" /></Tool>
        <Tool small label="锁定坐标"><path d="M4 12V3M2 5l2-3 2 3" stroke={TEAL} strokeWidth="1.800" /><circle cx="4" cy="14" r="1.800" /><path d="M7 14h7" stroke="#f05050" strokeWidth="2" /><path d="M13 10.500l4.500 3.500-4.500 3.500z" fill="#f05050" stroke="none" /><path d="M10 5h6v4h-6zM11.500 5V2.500q1.500-2 3 0V5" stroke={TEAL} fill="#dff4f5" /></Tool>
        <Tool small label="设置">
          <path d="M7.500 1h3l.5 2.200 1.500.8 2.200-.8 1.500 2.600-1.600 1.600v1.700l1.600 1.600-1.500 2.600-2.200-.7-1.500.9-.5 2.500h-3L7 13.500l-1.500-.9-2.200.7-1.500-2.600 1.600-1.600V7.400L1.800 5.800l1.500-2.600 2.200.8L7 3.200z" fill="#9fdcdf" stroke="#2a6c92" />
          <circle cx="9" cy="8.300" r="2.500" fill="#fff" stroke="#2a6c92" />
        </Tool>
      </div>
    </footer>
  );
}

export default function App() {
  return (
    <div className="flex h-screen flex-col overflow-hidden bg-white font-['Open_Sans','Noto_Sans_CJK_SC',sans-serif]">
      <TitleBar />
      <TabBar />
      <Ribbon />
      <main className="flex min-h-0 flex-1">
        <ViewBrowser />
        <div className="w-[3px] shrink-0 border-r border-[#c6c8ca] bg-[#dcdcdc]" />
        <section className="flex min-w-0 flex-1 flex-col">
          <div className="relative flex-1 bg-white">
            <FloorPlan />
            <ProgressPanel />
            <ViewCube />
          </div>
          <CommandBar />
        </section>
      </main>
      <StatusBar />
    </div>
  );
}
